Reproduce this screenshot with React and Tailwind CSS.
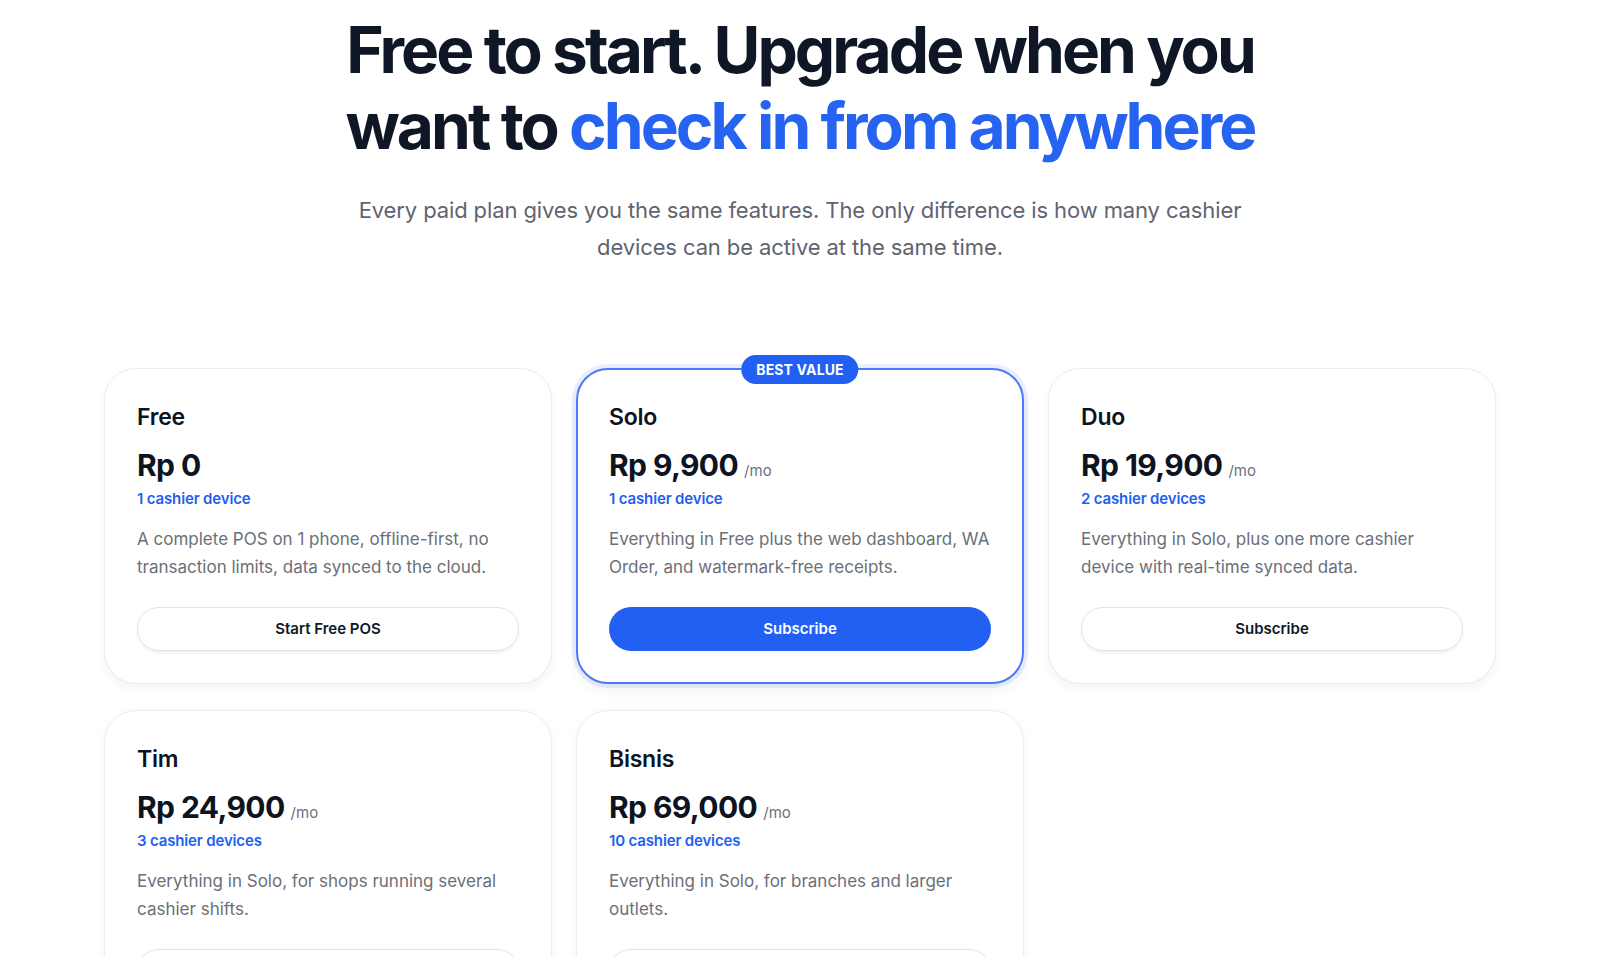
const plans = [
  {
    name: "Free",
    price: "Rp 0",
    period: false,
    devices: "1 cashier device",
    desc: "A complete POS on 1 phone, offline-first, no transaction limits, data synced to the cloud.",
    cta: "Start Free POS",
  },
  {
    name: "Solo",
    price: "Rp 9,900",
    period: true,
    devices: "1 cashier device",
    desc: "Everything in Free plus the web dashboard, WA Order, and watermark-free receipts.",
    cta: "Subscribe",
    featured: true,
  },
  {
    name: "Duo",
    price: "Rp 19,900",
    period: true,
    devices: "2 cashier devices",
    desc: "Everything in Solo, plus one more cashier device with real-time synced data.",
    cta: "Subscribe",
  },
  {
    name: "Tim",
    price: "Rp 24,900",
    period: true,
    devices: "3 cashier devices",
    desc: "Everything in Solo, for shops running several cashier shifts.",
    cta: "Subscribe",
  },
  {
    name: "Bisnis",
    price: "Rp 69,000",
    period: true,
    devices: "10 cashier devices",
    desc: "Everything in Solo, for branches and larger outlets.",
    cta: "Subscribe",
  },
];

const PlanCard = ({ plan }) => {
  const featured = plan.featured;
  return (
    <div
      className={
        featured
          ? "relative bg-white rounded-[32px] border-2 border-[#4a7af6] p-[31px] shadow-[0_0_0_4px_rgba(59,108,246,0.10),0_6px_14px_rgba(0,0,0,0.06)]"
          : "relative bg-white rounded-[32px] border border-[#ececec] p-8 shadow-[0_4px_10px_rgba(0,0,0,0.05)]"
      }
    >
      {featured && (
        <div className="absolute -top-[15px] left-1/2 -translate-x-1/2 h-[29px] px-[15px] flex items-center rounded-full bg-[#2160f3] text-white text-[14px] font-bold tracking-[0.01em] whitespace-nowrap">
          BEST VALUE
        </div>
      )}
      <h3 className="text-[23px] leading-8 font-semibold text-[#0d1321] tracking-[-0.01em]">
        {plan.name}
      </h3>
      <div className="mt-3.5 flex items-baseline">
        <span className="text-[30px] leading-9 font-bold text-[#0d1321] tracking-[-0.02em]">
          {plan.price}
        </span>
        {plan.period && (
          <span className="ml-1.5 text-[15px] text-[#6b7280]">/mo</span>
        )}
      </div>
      <p className="mt-1.5 text-[15px] leading-5 font-semibold text-[#2160f3] tracking-[-0.01em]">
        {plan.devices}
      </p>
      <p className="mt-4 text-[17px] leading-7 text-[#6b6f78]">
        {plan.desc}
      </p>
      <button
        className={
          featured
            ? "mt-[26px] w-full h-11 rounded-full bg-[#2160f3] text-white text-[15px] font-semibold"
            : "mt-[26px] w-full h-11 rounded-full bg-white border border-[#e4e4e4] shadow-[0_2px_4px_rgba(0,0,0,0.06)] text-[15px] font-semibold text-[#111827]"
        }
      >
        {plan.cta}
      </button>
    </div>
  );
};

export default function App() {
  return (
    <div
      className="min-h-screen bg-white pt-3"
      style={{ fontFamily: "Inter, 'Noto Sans', sans-serif" }}
    >
      <section className="mx-auto max-w-[1440px] px-6">
        <div className="text-center">
          <h1 className="text-[64px] leading-[76px] font-bold text-[#0f1626] tracking-[-0.046em]">
            Free to start. Upgrade when you
            <br />
            want to <span className="text-[#2563f0]">check in from anywhere</span>
          </h1>
          <p className="mt-7 mx-auto max-w-[960px] text-[22px] leading-[37px] text-[#5f6470] tracking-[-0.005em]">
            Every paid plan gives you the same features. The only difference is how many cashier
            <br />
            devices can be active at the same time.
          </p>
        </div>
        <div className="mt-[102px] grid grid-cols-3 gap-x-6 gap-y-[26px]">
          {plans.map((plan) => (
            <PlanCard key={plan.name} plan={plan} />
          ))}
        </div>
      </section>
    </div>
  );
}
